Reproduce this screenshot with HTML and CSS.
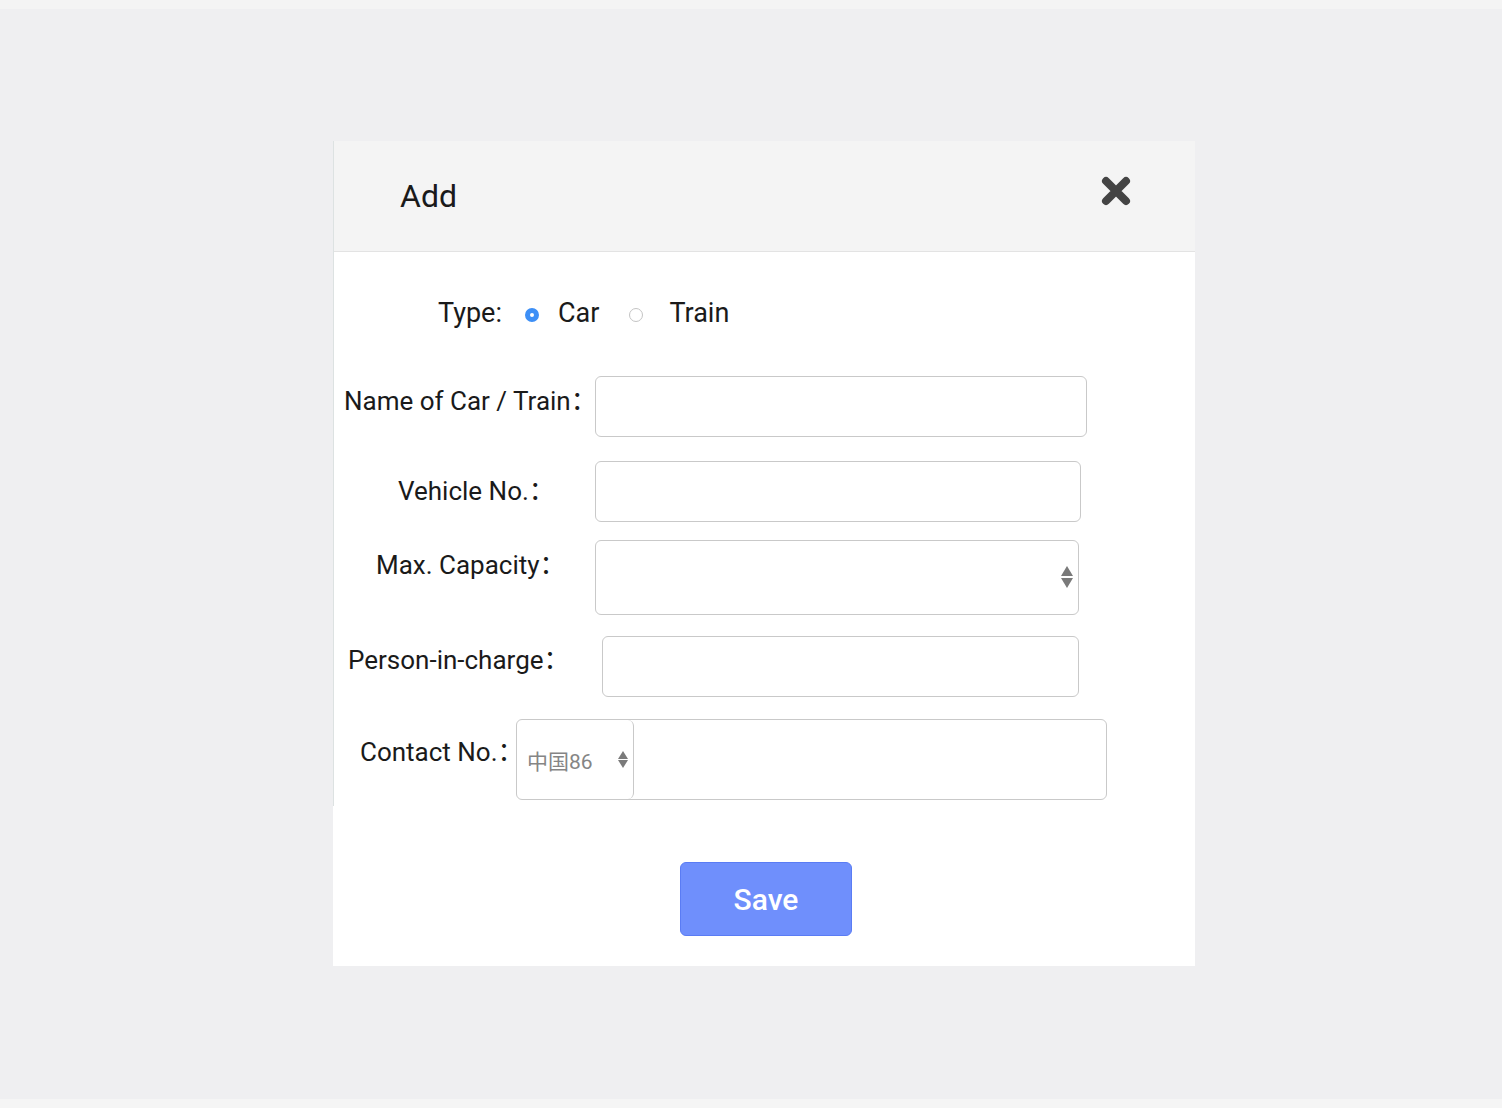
FILE: index.html
```html
<!DOCTYPE html>
<html lang="en">
<head>
    <meta charset="UTF-8">
    <meta name="viewport" content="width=device-width, initial-scale=1.0">
    <title>Add</title>
    <link rel="stylesheet" href="styles.css">
</head>
<body>

    <div class="top-strip"></div>

    <main class="page">
        <!-- Ventana de alta -->
        <div class="modal">
            <div class="modal-main">
                <div class="modal-header">
                    <h2>Add</h2>
                    <svg class="close-icon" width="30" height="30" viewBox="0 0 30 30">
                        <path d="M5 5 L25 25 M25 5 L5 25" stroke="#444" stroke-width="8" stroke-linecap="round"/>
                    </svg>
                </div>

                <form class="modal-form">
                    <div class="type-row">
                        <span class="type-label">Type:</span>
                        <span class="radio checked"></span>
                        <span class="radio-text">Car</span>
                        <span class="radio"></span>
                        <span class="radio-text">Train</span>
                    </div>

                    <div class="row row-name">
                        <label>Name of Car / Train：</label>
                        <div class="field"></div>
                    </div>

                    <div class="row row-vehicle">
                        <label>Vehicle No.：</label>
                        <div class="field"></div>
                    </div>

                    <div class="row row-capacity">
                        <label>Max. Capacity：</label>
                        <div class="field">
                            <span class="spinner">
                                <span class="arrow-up"></span>
                                <span class="arrow-down"></span>
                            </span>
                        </div>
                    </div>

                    <div class="row row-person">
                        <label>Person-in-charge：</label>
                        <div class="field"></div>
                    </div>

                    <div class="row row-contact">
                        <label>Contact No.：</label>
                        <div class="phone">
                            <div class="code">
                                <span>中国86</span>
                                <span class="spinner small">
                                    <span class="arrow-up"></span>
                                    <span class="arrow-down"></span>
                                </span>
                            </div>
                            <div class="phone-number"></div>
                        </div>
                    </div>
                </form>
            </div>

            <div class="modal-footer">
                <button class="save-btn">Save</button>
            </div>
        </div>
    </main>

    <div class="bottom-strip"></div>

</body>
</html>
```

FILE: styles.css
```css
body {
    margin: 0;
    padding: 0;
    font-family: Roboto, "Noto Sans CJK SC", sans-serif;
    color: #1a1a1a;
    background: #efeff1;
}

.top-strip {
    height: 9px;
    background: #f4f4f4;
}

.bottom-strip {
    height: 9px;
    background: #f5f5f5;
}

.page {
    height: 1090px;
    padding-top: 132px;
    box-sizing: border-box;
}

/* VENTANA */
.modal {
    margin-left: 333px;
    width: 862px;
    background: #fff;
}

.modal-main {
    border-left: 1px solid #dde2e2;
}

.modal-header {
    height: 110px;
    background: #f4f4f4;
    border-bottom: 1px solid #e3e3e3;
    display: flex;
    align-items: center;
    justify-content: space-between;
    padding: 0 64px 0 66px;
}

.modal-header h2 {
    margin: 0;
    font-size: 32px;
    font-weight: 400;
    color: #1a1a1a;
}

.close-icon {
    margin-top: -11px;
}

.modal-form {
    padding: 46px 0 6px;
}

.type-row {
    display: flex;
    align-items: center;
    height: 30px;
    padding-left: 104px;
    font-size: 27px;
}

.radio {
    width: 14px;
    height: 14px;
    border-radius: 50%;
    border: 1px solid #c4c4c4;
    box-sizing: border-box;
    background: #fff;
    margin-top: 4px;
}

.type-label {
    margin-right: 23px;
}

.radio.checked {
    border: 5px solid #3d8ff6;
}

.radio-text {
    margin: 0 30px 0 19px;
}

.radio-text:last-child {
    margin-left: 26px;
}

.row {
    display: flex;
    align-items: flex-start;
    font-size: 26px;
}

.row label {
    white-space: nowrap;
    box-sizing: border-box;
    line-height: 30px;
    flex-shrink: 0;
}

.field {
    height: 61px;
    border: 1px solid #c9c9c9;
    border-radius: 6px;
    box-sizing: border-box;
    position: relative;
}

.row-name {
    margin-top: 48px;
}

.row-name label {
    width: 261px;
    padding-left: 10px;
    margin-top: 10px;
}

.row-name .field {
    width: 492px;
}

.row-vehicle {
    margin-top: 24px;
}

.row-vehicle label {
    width: 261px;
    padding-left: 64px;
    margin-top: 15px;
}

.row-vehicle .field {
    width: 486px;
}

.row-capacity {
    margin-top: 18px;
}

.row-capacity label {
    width: 261px;
    padding-left: 42px;
    margin-top: 10px;
}

.row-capacity .field {
    width: 484px;
    height: 75px;
}

.row-person {
    margin-top: 21px;
}

.row-person label {
    width: 268px;
    padding-left: 14px;
    margin-top: 9px;
}

.row-person .field {
    width: 477px;
}

.row-contact {
    margin-top: 22px;
}

.row-contact label {
    width: 182px;
    padding-left: 26px;
    margin-top: 18px;
}

.phone {
    display: flex;
    width: 591px;
    height: 81px;
    border: 1px solid #c9c9c9;
    border-radius: 6px;
    box-sizing: border-box;
}

.code {
    width: 117px;
    border-right: 1px solid #c9c9c9;
    border-radius: 6px;
    display: flex;
    align-items: center;
    justify-content: space-between;
    padding: 0 5px 0 10px;
    box-sizing: border-box;
    font-size: 21px;
    color: #858585;
}

.phone-number {
    flex: 1;
}

/* flechas */
.spinner {
    position: absolute;
    right: 5px;
    top: 25px;
    display: flex;
    flex-direction: column;
    gap: 2px;
}

.spinner.small {
    position: static;
    gap: 1px;
}

.arrow-up,
.arrow-down {
    width: 0;
    height: 0;
    border-left: 6px solid transparent;
    border-right: 6px solid transparent;
}

.arrow-up {
    border-bottom: 10px solid #7a7a7a;
}

.arrow-down {
    border-top: 10px solid #7a7a7a;
}

.small .arrow-up,
.small .arrow-down {
    border-left-width: 5px;
    border-right-width: 5px;
}

.small .arrow-up {
    border-bottom-width: 8px;
}

.small .arrow-down {
    border-top-width: 8px;
}

.modal-footer {
    padding: 56px 0 30px 347px;
}

.save-btn {
    display: block;
    width: 172px;
    height: 74px;
    background: #6f8ffc;
    border: 1px solid #5a7cf4;
    border-radius: 6px;
    color: #fff;
    font-family: Roboto, sans-serif;
    font-size: 30px;
    font-weight: 500;
    cursor: pointer;
}
```
